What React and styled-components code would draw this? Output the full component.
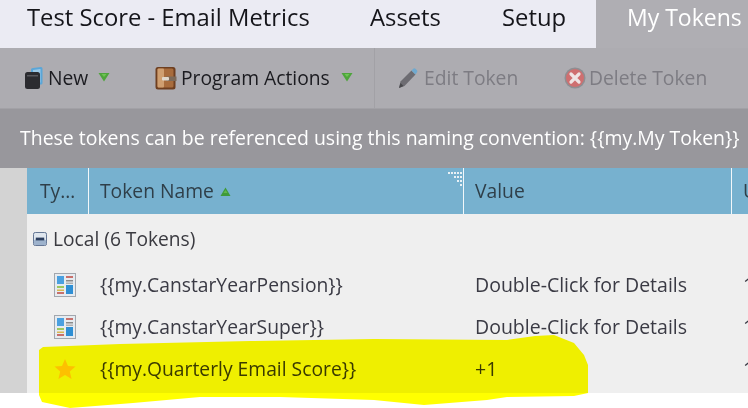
import React from 'react';
import styled, {createGlobalStyle} from 'styled-components';

const GlobalStyle = createGlobalStyle`
    html, body {
        margin: 0;
        padding: 0;
        background: #fff;
    }
    body {
        font-family: "Open Sans", "Liberation Sans", sans-serif;
    }
`;

const Page = styled.div`
    position: relative;
    width: 748px;
    height: 408px;
    overflow: hidden;
    background: #fff;
`;

const TabBar = styled.div`
    display: flex;
    height: 48px;
    padding-left: 27px;
    background: #ebebf3;
`;

const Tab = styled.div`
    width: ${props => props.width}px;
    flex: none;
    font-size: 23.8px;
    line-height: 34px;
    color: #15151a;
`;

const ActiveTab = styled.div`
    flex: 1;
    padding-left: 31px;
    font-size: 23px;
    line-height: 34px;
    color: #fff;
    background: #afaeb3;
    white-space: nowrap;
`;

const Toolbar = styled.div`
    display: flex;
    align-items: center;
    height: 60px;
    background: #adacb1;
    border-bottom: 1px solid #a2a1a6;
    box-sizing: content-box;
`;

const ToolGroup = styled.div`
    display: flex;
    align-items: center;
    width: ${props => props.width}px;
    height: 60px;
    padding-left: ${props => props.left}px;
    box-sizing: border-box;
    flex: none;
    border-right: ${props => props.divider ? '1px solid #a2a1a6' : 'none'};
`;

const ToolButton = styled.div`
    display: flex;
    align-items: center;
    width: ${props => props.width}px;
    flex: none;
    font-size: 19.3px;
    line-height: 26px;
    color: ${props => props.disabled ? '#7d7c83' : '#1b1b20'};
    white-space: nowrap;
`;

const ToolIcon = styled.svg`
    width: ${props => props.size || 20}px;
    height: 24px;
    margin-right: ${props => props.gap}px;
    flex: none;
`;

const Caret = styled.svg`
    width: 12px;
    height: 10px;
    margin-left: ${props => props.gap}px;
    margin-top: -2px;
    flex: none;
`;

const Banner = styled.div`
    height: 59px;
    padding-left: 20px;
    font-size: 19.45px;
    line-height: 57px;
    color: #fff;
    background: #98979c;
    white-space: nowrap;
`;

const Body = styled.div`
    display: flex;
    height: 225px;
`;

const Gutter = styled.div`
    width: 27px;
    flex: none;
    background: #d3d3d3;
`;

const Grid = styled.div`
    flex: 1;
    background: #efefef;
    overflow: hidden;
`;

const HeaderRow = styled.div`
    display: grid;
    grid-template-columns: 62px 375px 268px 1fr;
    height: 46px;
    background: #77b1cf;
`;

const HeaderCell = styled.div`
    position: relative;
    display: flex;
    align-items: center;
    padding-left: ${props => props.left || 11}px;
    padding-bottom: 2px;
    font-size: 19.3px;
    color: #2f3f49;
    white-space: nowrap;
    overflow: hidden;
    border-right: ${props => props.last ? 'none' : '1px solid #f2f7fa'};
`;

const SortArrow = styled.svg`
    width: 11px;
    height: 10px;
    margin-left: 6px;
    margin-top: 3px;
`;

const ResizeDots = styled.svg`
    position: absolute;
    top: 3px;
    right: 1px;
    width: 14px;
    height: 16px;
`;

const GroupRow = styled.div`
    display: flex;
    align-items: center;
    height: 50px;
    padding-left: 6px;
    font-size: 19.2px;
    line-height: 26px;
    color: #3a3a40;
`;

const GroupLabel = styled.span`
    margin-top: -1px;
`;

const Expander = styled.svg`
    width: 14px;
    height: 14px;
    margin-right: 6px;
    flex: none;
`;

const Row = styled.div`
    display: grid;
    grid-template-columns: 62px 375px 268px 1fr;
    height: 42px;
    align-items: center;
    font-size: 19.3px;
    color: #3a3a44;
    white-space: nowrap;
`;

const TypeCell = styled.div`
    display: flex;
    justify-content: center;
    padding-left: 24px;
    padding-right: 10px;
`;

const TextCell = styled.div`
    padding-left: 11px;
    padding-bottom: 2px;
    overflow: hidden;
`;

const ValueCell = styled(TextCell)`
    font-size: 19.5px;
`;

const Highlight = styled.svg`
    position: absolute;
    left: 0;
    top: 0;
    width: 748px;
    height: 408px;
    mix-blend-mode: multiply;
    pointer-events: none;
`;

function BookIcon() {
    return (
        <ToolIcon viewBox="0 0 20 24" gap={4}>
            <path d="M7 3.500 Q7 2 9 2 L17 1 Q18.500 1 18.500 2.500 L18.500 17 Q18.500 18.500 17 18.500 L14 19 L14 7 L7 7 Z" fill="#5aa6d8"/>
            <path d="M9 4 L16.500 3 L16.500 16.500 L14 17 L14 6 L9 6 Z" fill="#9cc8e6"/>
            <rect x="1" y="6" width="15" height="17" rx="2.500" fill="#2b2b30"/>
            <rect x="3" y="9" width="11" height="1.500" fill="#57575c"/>
        </ToolIcon>
    );
}

function WalletIcon() {
    return (
        <ToolIcon viewBox="0 0 22 24" gap={4} size={22}>
            <rect x="0.500" y="1" width="20" height="22.500" rx="2.500" fill="#6e3f20"/>
            <rect x="2.500" y="2.500" width="16" height="19" rx="1.500" fill="#a86c3c"/>
            <rect x="2.500" y="2.500" width="6.500" height="19" rx="1" fill="#cf9f70"/>
            <path d="M11 10.500 H21.500 V15 H11 Z" fill="#7d6a58"/>
            <rect x="7" y="11" width="7" height="3.500" rx="1" fill="#e0d8cc"/>
        </ToolIcon>
    );
}

function PencilIcon() {
    return (
        <ToolIcon viewBox="0 0 20 24" gap={6} size={20}>
            <path d="M1 22 L2.500 15.500 L13.500 4.500 L17.500 8.500 L6.500 20 Z" fill="#6d6c72"/>
            <path d="M1 22 L2.500 17 L5.500 20 Z" fill="#48484c"/>
            <path d="M13.500 4.500 L15.500 2.500 Q16.500 1.700 17.500 2.700 L19 4.200 Q19.800 5.200 19 6.200 L17.500 8.500 Z" fill="#6fa9cf"/>
        </ToolIcon>
    );
}

function DeleteIcon() {
    return (
        <ToolIcon viewBox="0 0 22 24" gap={3} size={22}>
            <circle cx="11" cy="12" r="10.500" fill="#8f8e92"/>
            <circle cx="11" cy="12" r="9" fill="#cf6f70"/>
            <path d="M7 8 L15 16 M15 8 L7 16" stroke="#efe4e4" strokeWidth="3.200" strokeLinecap="round"/>
        </ToolIcon>
    );
}

function DownCaret({gap}) {
    return (
        <Caret viewBox="0 0 12 10" gap={gap}>
            <path d="M0.500 1 H11.500 L6 9.500 Z" fill="#4ea53c"/>
            <path d="M3.500 2 H8.500 L6 5 Z" fill="#6fc455"/>
        </Caret>
    );
}

function ReportIcon() {
    return (
        <svg width="22" height="24" viewBox="0 0 22 24">
            <rect x="0.500" y="0.500" width="21" height="23" fill="#e6ebf0" stroke="#a2a7ae"/>
            <rect x="3" y="3" width="7" height="8" fill="#4aa0e0"/>
            <rect x="12" y="3" width="7" height="2" fill="#c8706c"/>
            <rect x="12" y="7" width="7" height="1.500" fill="#8a8a8a"/>
            <rect x="12" y="9.500" width="7" height="1.500" fill="#b0b0b0"/>
            <rect x="3" y="13" width="7" height="2" fill="#9cc860"/>
            <rect x="3" y="16.500" width="7" height="1.500" fill="#d8b850"/>
            <rect x="3" y="19" width="7" height="2" fill="#c8706c"/>
            <rect x="12" y="12" width="7" height="9" fill="#2f8fd4"/>
        </svg>
    );
}

function StarIcon() {
    return (
        <svg width="22" height="22" viewBox="0 0 22 22">
            <path d="M11 1 L14 8 L21.500 8.600 L15.800 13.500 L17.600 21 L11 17 L4.400 21 L6.200 13.500 L0.500 8.600 L8 8 Z" fill="#fdc010"/>
        </svg>
    );
}

const tokens = [
    {name: '{{my.CanstarYearPension}}', value: 'Double-Click for Details', icon: <ReportIcon/>},
    {name: '{{my.CanstarYearSuper}}', value: 'Double-Click for Details', icon: <ReportIcon/>},
    {name: '{{my.Quarterly Email Score}}', value: '+1', icon: <StarIcon/>},
];

export default function App() {
    return (
        <Page>
            <GlobalStyle/>
            <TabBar>
                <Tab width={343}>Test Score - Email Metrics</Tab>
                <Tab width={132}>Assets</Tab>
                <Tab width={94}>Setup</Tab>
                <ActiveTab>My Tokens</ActiveTab>
            </TabBar>
            <Toolbar>
                <ToolGroup width={375} left={24} divider>
                    <ToolButton width={131}><BookIcon/>New<DownCaret gap={10}/></ToolButton>
                    <ToolButton><WalletIcon/>Program Actions<DownCaret gap={11}/></ToolButton>
                </ToolGroup>
                <ToolGroup width={373} left={23}>
                    <ToolButton width={166} disabled><PencilIcon/>Edit Token</ToolButton>
                    <ToolButton disabled><DeleteIcon/>Delete Token</ToolButton>
                </ToolGroup>
            </Toolbar>
            <Banner>These tokens can be referenced using this naming convention: {'{{my.My Token}}'}</Banner>
            <Body>
                <Gutter/>
                <Grid>
                    <HeaderRow>
                        <HeaderCell left={13}>Ty…</HeaderCell>
                        <HeaderCell>
                            Token Name
                            <SortArrow viewBox="0 0 11 10">
                                <path d="M5.500 0.500 L10.500 9 H0.500 Z" fill="#3f9a3a"/>
                                <path d="M5.500 3 L7.500 6 H3.500 Z" fill="#62b84c"/>
                            </SortArrow>
                            <ResizeDots viewBox="0 0 14 16" fill="#e8f1f6">
                                <rect x="0" y="1" width="2" height="2"/><rect x="3" y="1" width="2" height="2"/>
                                <rect x="6" y="1" width="2" height="2"/><rect x="9" y="1" width="2" height="2"/>
                                <rect x="12" y="1" width="2" height="2"/><rect x="6" y="5" width="2" height="2"/>
                                <rect x="9" y="5" width="2" height="2"/><rect x="12" y="5" width="2" height="2"/>
                                <rect x="9" y="9" width="2" height="2"/><rect x="12" y="9" width="2" height="2"/>
                                <rect x="12" y="13" width="2" height="2"/>
                            </ResizeDots>
                        </HeaderCell>
                        <HeaderCell>Value</HeaderCell>
                        <HeaderCell last>U</HeaderCell>
                    </HeaderRow>
                    <GroupRow>
                        <Expander viewBox="0 0 15 15">
                            <rect x="0.500" y="0.500" width="14" height="14" rx="2" fill="#dfe6ee" stroke="#55698a"/>
                            <rect x="1" y="8" width="13" height="6" rx="2" fill="#9db2cc"/>
                            <rect x="3" y="6" width="9" height="3" fill="#2c3e5e"/>
                        </Expander>
                        <GroupLabel>Local (6 Tokens)</GroupLabel>
                    </GroupRow>
                    {tokens.map(token => (
                        <Row key={token.name}>
                            <TypeCell>{token.icon}</TypeCell>
                            <TextCell>{token.name}</TextCell>
                            <ValueCell>{token.value}</ValueCell>
                            <TextCell>1</TextCell>
                        </Row>
                    ))}
                </Grid>
            </Body>
            <Highlight viewBox="0 0 748 408">
                <path fill="#ffff00" d="M39 350 L43 347 L120 344 L250 341 L374 339 L507 340 L535 336 L554 335 L574 343 L584 355 L588 365 L588 393 L574 396 L507 397 L487 400 L424 405 L374 400 L280 397 L200 397 L133 403 L70 408 L42 402 L39 395 Z"/>
            </Highlight>
        </Page>
    );
}
